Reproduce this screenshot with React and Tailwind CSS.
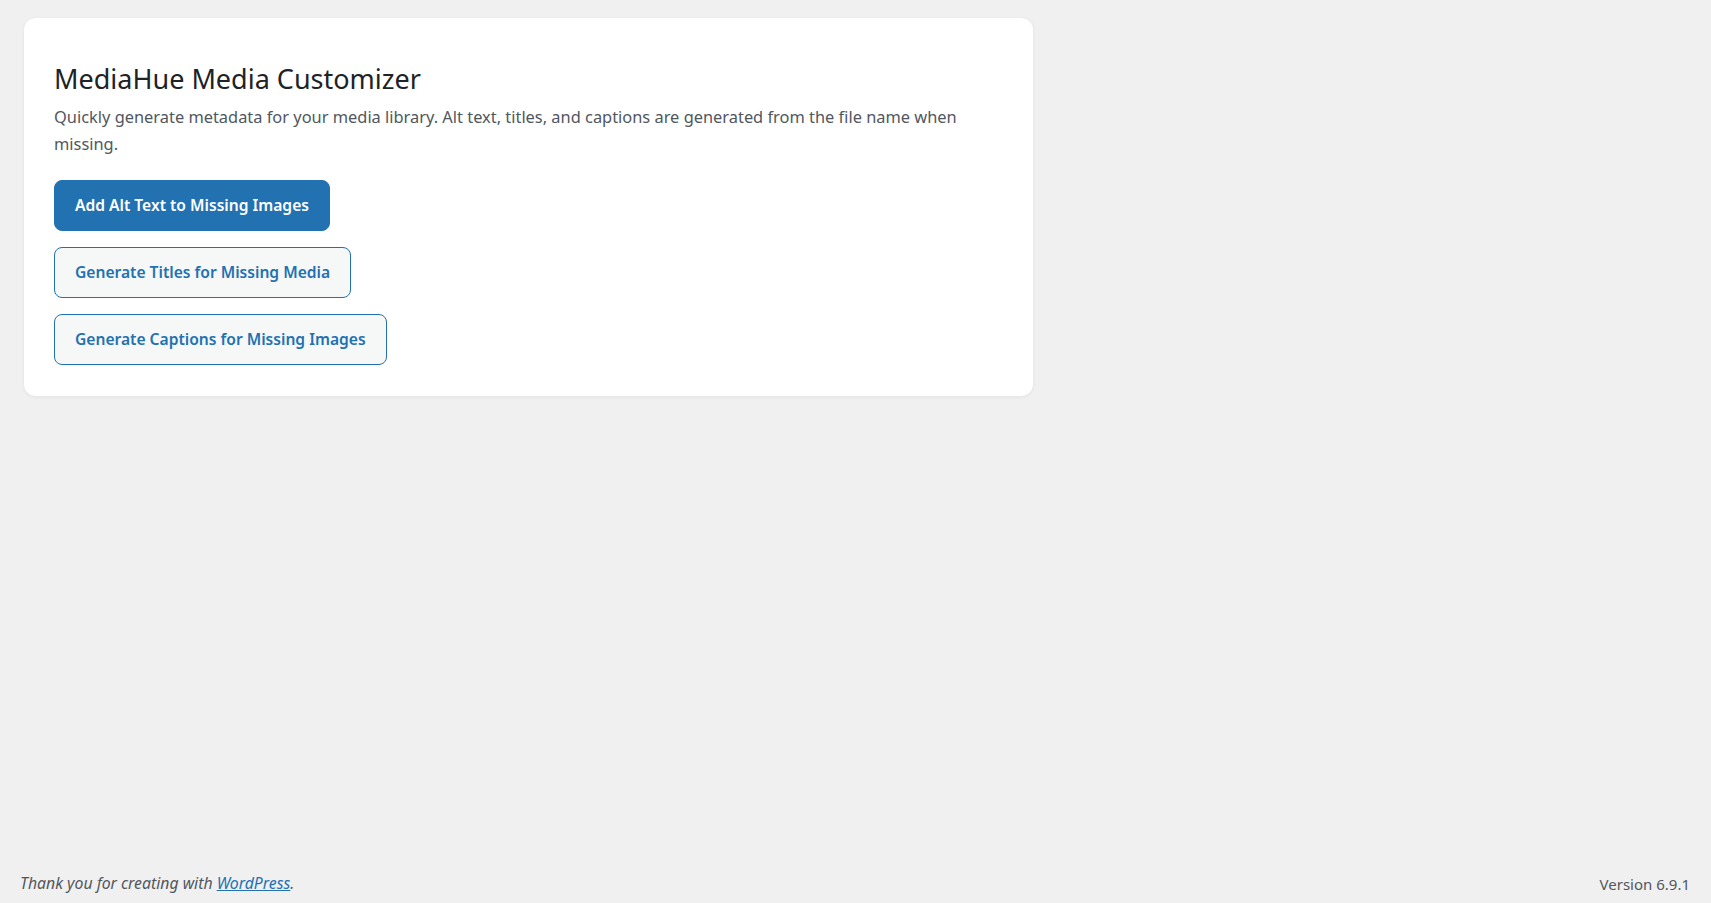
const actions = [
  { label: 'Add Alt Text to Missing Images', primary: true },
  { label: 'Generate Titles for Missing Media' },
  { label: 'Generate Captions for Missing Images' },
];

export default function App() {
  return (
    <div className="min-h-screen flex flex-col bg-[#f0f0f1] text-[#3c434a] font-['Noto_Sans',sans-serif]">
      <main className="flex-1 pl-[24px] pt-[18px]">
        <div className="w-[1009px] bg-white rounded-[12px] shadow-[0_1px_4px_rgba(0,0,0,0.06)] px-[30px] pt-[41px] pb-[31px]">
          <h1 className="text-[27px] leading-[40px] text-[#1d2327] font-normal">MediaHue Media Customizer</h1>
          <p className="mt-[4px] text-[16.4px] leading-[27px] text-[#50575e] max-w-[930px]">
            Quickly generate metadata for your media library. Alt text, titles, and captions are generated from the file
            name when missing.
          </p>
          <div className="mt-[23px] flex flex-col items-start gap-[16px]">
            {actions.map((a) => (
              <button
                key={a.label}
                className={`h-[51px] px-[20px] rounded-[8px] border text-[15.6px] font-semibold ${
                  a.primary
                    ? 'bg-[#2271b1] border-[#2271b1] text-white'
                    : 'bg-[#f6f7f7] border-[#2271b1] text-[#2271b1]'
                }`}
              >
                {a.label}
              </button>
            ))}
          </div>
        </div>
      </main>
      <footer className="flex justify-between items-center px-[20px] pb-[7px] text-[#50575e]">
        <p className="italic text-[15.8px]">
          Thank you for creating with{' '}
          <a href="#" className="text-[#2271b1] underline">
            WordPress
          </a>
          .
        </p>
        <p className="pr-[1px] text-[15px]">Version 6.9.1</p>
      </footer>
    </div>
  );
}
